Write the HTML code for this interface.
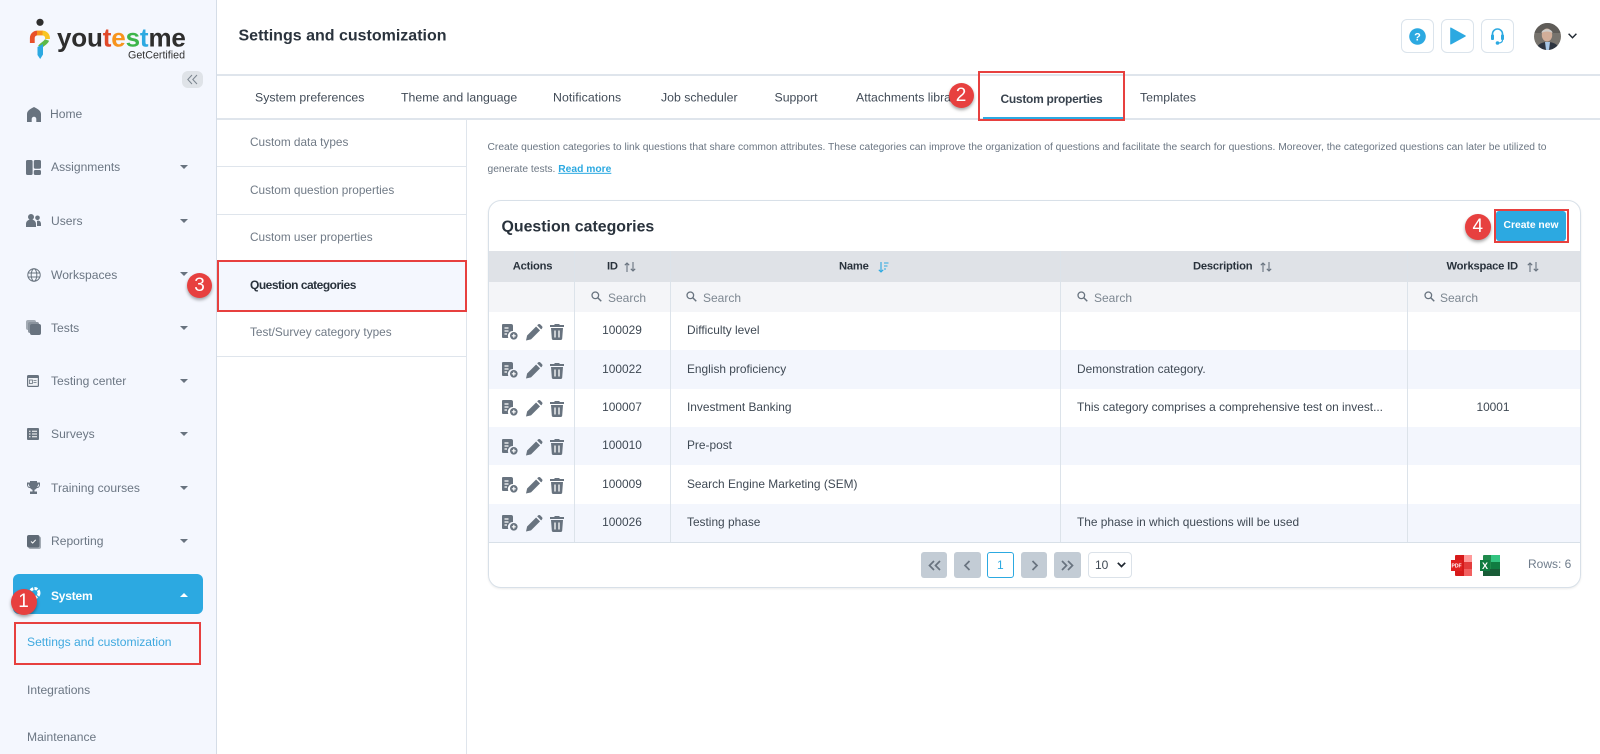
<!DOCTYPE html>
<html><head><meta charset="utf-8"><title>Settings and customization</title>
<style>
html,body{margin:0;padding:0;width:1600px;height:754px;overflow:hidden;background:#fff;font-family:"Liberation Sans",sans-serif}
.a{position:absolute}
.t{position:absolute;white-space:nowrap;transform:translateY(-50%);line-height:1.2}
.c{transform:translate(-50%,-50%)}
.s{font-size:12.1px;color:#6b7683}
.tab{font-size:12.3px;color:#414b57}
.sub{font-size:11.8px;color:#707a86}
.h{font-size:11.2px;font-weight:bold;letter-spacing:-.2px;color:#29323c}
.ph{font-size:12px;color:#7d8791}
.d{font-size:11.9px;color:#3f4954}
.b{position:absolute;width:26px;height:26px;border-radius:50%;background:#e7403f;color:#fff;font-size:19px;line-height:26px;text-align:center;box-shadow:0 2px 3px rgba(0,0,0,.35)}
.r{position:absolute;border:2.5px solid #e7403f;box-sizing:border-box}
.ln{position:absolute;background:#dfe5ec}
.pg{position:absolute;top:551.5px;width:26.5px;height:26.5px;border-radius:3px;background:#c3ccd5}
.tri{position:absolute;left:180px;width:0;height:0;border-left:4px solid transparent;border-right:4px solid transparent;border-top:4.5px solid #68737f}
svg{position:absolute;overflow:visible}
.hb{position:absolute;top:19px;width:33px;height:33.5px;border:1px solid #dbe4ec;border-radius:6px;box-sizing:border-box}
</style></head><body>

<svg width="0" height="0" style="position:absolute"><defs>
<symbol id="doc" viewBox="0 0 16 16"><path fill="#68737f" d="M1 0h8a2 2 0 0 1 2 2v5a5 5 0 0 0-4.7 7H1a1 1 0 0 1-1-1V1a1 1 0 0 1 1-1z"/><path stroke="#fff" stroke-width="1.2" d="M2.5 4h4M2.5 7h4M2.5 10h2.5"/><circle cx="11.8" cy="11.8" r="3.8" fill="#68737f"/><path stroke="#fff" stroke-width="1.2" d="M9.8 11.8h4M11.8 9.8v4"/></symbol>
<symbol id="pen" viewBox="0 0 18 18"><path fill="#68737f" d="M0 18 1.2 12.5 11 2.700 15.300 7 5.500 16.800z"/><path fill="#68737f" d="M12.200 1.500 13 .7a2 2 0 0 1 2.800 0l1.500 1.500a2 2 0 0 1 0 2.800l-.8.800z"/></symbol>
<symbol id="tr" viewBox="0 0 14 16"><path fill="#68737f" d="M5 0h4l1 1h4v2H0V1h4zM1 4h12l-.8 10.500A1.600 1.600 0 0 1 10.600 16H3.400a1.600 1.600 0 0 1-1.600-1.500z"/><path stroke="#fff" stroke-width="1.300" d="M5 6.500v7M9 6.500v7"/></symbol>
<symbol id="mag" viewBox="0 0 12 12"><circle cx="4.700" cy="4.700" r="3.600" fill="none" stroke="#68737f" stroke-width="1.400"/><path stroke="#68737f" stroke-width="1.600" d="M7.500 7.500l3.700 3.700"/></symbol>
<symbol id="sort" viewBox="0 0 12 12"><path fill="none" stroke="#68737f" stroke-width="1.100" d="M3 11V2M.8 4.200 3 2l2.200 2.200M9 1v9M6.800 7.800 9 10l2.200-2.200"/></symbol>
</defs></svg>

<!-- sidebar -->
<div class="a" style="left:0;top:0;width:216px;height:754px;background:#f4f7fe;border-right:1.5px solid #d5dde7"></div>
<svg style="left:29px;top:18px" width="22" height="42" viewBox="0 0 22 42" fill="none">
<circle cx="11" cy="4.300" r="3.600" fill="#2e2e2e"/>
<path d="M3.300 25V20a5 5 0 0 1 5-5" stroke="#e8502a" stroke-width="4.800"/>
<path d="M8 15h6" stroke="#f7941d" stroke-width="4.800"/>
<path d="M13.500 15a5 5 0 0 1 5 5v1" stroke="#f9c523" stroke-width="4.800"/>
<path d="M18 22c-1 3-5 4-7 7" stroke="#5cb947" stroke-width="4.400"/>
<path d="M8.500 29l5.500-3v10.500L11.200 41 8.500 37z" fill="#2ca9e1"/></svg>
<div class="t" style="left:57px;top:38px;font-size:26px;font-weight:bold;letter-spacing:-.15px;color:#2e2e2e">you<span style="color:#e0492a">t</span><span style="color:#f7941d">e</span><span style="color:#3db54a">s</span><span style="color:#2ca9e1">t</span>me</div>
<div class="t" style="left:128px;top:55.500px;font-size:10.700px;color:#333">GetCertified</div>
<div class="a" style="left:182px;top:71px;width:21px;height:17px;border-radius:6px;background:#dfe3e8"></div>
<svg style="left:187px;top:74px" width="11" height="11" viewBox="0 0 11 11"><path fill="none" stroke="#7b858f" d="M5 1 .8 5.500 5 10M10 1 5.800 5.500 10 10"/></svg>

<svg style="left:27px;top:107px" width="14" height="15" viewBox="0 0 14 15"><path fill="#68737f" d="M7 0C10 1.500 14 3.500 14 7v8H9.300v-3a2.300 2.300 0 0 0-4.600 0v3H0V7C0 3.500 4 1.500 7 0z"/></svg>
<div class="t s" style="left:50px;top:114px">Home</div>

<svg style="left:26px;top:160px" width="15" height="15" viewBox="0 0 15 15"><rect width="6.600" height="15" rx="1.500" fill="#68737f"/><rect x="7.800" width="7.200" height="8.800" rx="1.500" fill="#68737f"/><rect x="7.800" y="10" width="7.200" height="5" rx="1.500" fill="#68737f"/></svg>
<div class="t s" style="left:51px;top:167px">Assignments</div><div class="tri" style="top:165px"></div>

<svg style="left:26px;top:214px" width="15" height="13" viewBox="0 0 15 13"><circle cx="5" cy="3" r="3" fill="#68737f"/><circle cx="11.500" cy="3.800" r="2.300" fill="#68737f"/><path fill="#68737f" d="M0 10c0-6 10-6 10 0v3H0zM11 7c2-1 4 .5 4 3v2h-4z"/></svg>
<div class="t s" style="left:51px;top:221px">Users</div><div class="tri" style="top:219px"></div>

<svg style="left:26.500px;top:267.500px" width="14" height="14" viewBox="0 0 14 14" fill="none" stroke="#68737f"><circle cx="7" cy="7" r="6.200"/><ellipse cx="7" cy="7" rx="2.800" ry="6.200"/><path d="M1 5h12M1 9h12"/></svg>
<div class="t s" style="left:51px;top:274.500px">Workspaces</div><div class="tri" style="top:272px"></div>

<svg style="left:26px;top:320px" width="15" height="15" viewBox="0 0 15 15"><rect x="0" y="0" width="10" height="10" rx="2" fill="#a3abb4"/><rect x="2" y="2" width="11" height="11" rx="2" fill="#8a939d"/><rect x="4" y="4" width="11" height="11" rx="2" fill="#68737f"/></svg>
<div class="t s" style="left:51px;top:327.500px">Tests</div><div class="tri" style="top:325.500px"></div>

<svg style="left:27px;top:374.500px" width="12" height="12" viewBox="0 0 12 12"><rect width="12" height="12" rx="1.500" fill="#68737f"/><rect x="1.200" y="3" width="9.600" height="7.800" fill="#eef1f5"/><rect x="2.400" y="5" width="3" height="3.500" fill="none" stroke="#68737f" stroke-width=".8"/><path stroke="#68737f" stroke-width=".8" d="M6.500 5.500h3M6.500 7.500h3"/></svg>
<div class="t s" style="left:51px;top:381px">Testing center</div><div class="tri" style="top:378.500px"></div>

<svg style="left:27px;top:428px" width="12" height="12" viewBox="0 0 12 12"><rect width="12" height="12" rx="1" fill="#68737f"/><path stroke="#fff" d="M2 3.200h1.500M5 3.200h5M2 6h1.500M5 6h5M2 8.800h1.500M5 8.800h5"/></svg>
<div class="t s" style="left:51px;top:434px">Surveys</div><div class="tri" style="top:432px"></div>

<svg style="left:27px;top:481px" width="13" height="13" viewBox="0 0 13 13"><path fill="#68737f" d="M3 0h7v1.500h3V4a3 3 0 0 1-3.200 3A3.500 3.500 0 0 1 7.500 8.900V10.500H10V13H3v-2.500h2.500V8.900A3.500 3.500 0 0 1 3.200 7 3 3 0 0 1 0 4V1.500h3zM1 2.500V4a2 2 0 0 0 2 2zM12 2.500 10 6a2 2 0 0 0 2-2z"/></svg>
<div class="t s" style="left:51px;top:488px">Training courses</div><div class="tri" style="top:486px"></div>

<svg style="left:27px;top:534.500px" width="14" height="14" viewBox="0 0 14 14"><rect x="1.500" y="1.500" width="12.500" height="12.500" rx="2" fill="#a3abb4"/><rect width="12.500" height="12.500" rx="2" fill="#5f6a76"/><path fill="none" stroke="#fff" stroke-width="1" d="M4 6.500 5.700 8 8.700 4.800"/></svg>
<div class="t s" style="left:51px;top:541px">Reporting</div><div class="tri" style="top:539px"></div>

<div class="a" style="left:13px;top:574px;width:189.500px;height:40px;border-radius:6px;background:#2ca9e1"></div>
<svg style="left:28px;top:586px" width="13" height="14" viewBox="0 0 13 14"><circle cx="6.500" cy="7" r="4.500" fill="none" stroke="#fff" stroke-width="3" stroke-dasharray="3 1.200"/></svg>
<div class="t" style="left:51px;top:595.500px;font-size:12px;letter-spacing:-.2px;font-weight:bold;color:#fff">System</div>
<div class="tri" style="top:592.500px;border-top:0;border-bottom:4.500px solid #fff"></div>
<div class="b" style="left:10.500px;top:589px">1</div>
<div class="r" style="left:14px;top:622px;width:186.500px;height:42.500px"></div>
<div class="t" style="left:27px;top:642px;font-size:12.100px;color:#3fa9df">Settings and customization</div>
<div class="t s" style="left:27px;top:689.500px">Integrations</div>
<div class="t s" style="left:27px;top:737px">Maintenance</div>

<!-- header -->
<div class="t" style="left:238.500px;top:36px;font-size:16px;font-weight:bold;color:#2a333d">Settings and customization</div>
<div class="ln" style="left:217px;top:74px;width:1383px;height:1.500px"></div>
<div class="hb" style="left:1400.500px"></div><div class="hb" style="left:1441px"></div><div class="hb" style="left:1481px"></div>
<svg style="left:1409px;top:27.500px" width="17" height="17" viewBox="0 0 17 17"><circle cx="8.500" cy="8.500" r="8.300" fill="#2ca9e1"/><text x="8.500" y="12.500" font-size="11" font-weight="bold" fill="#fff" text-anchor="middle" font-family="Liberation Sans">?</text></svg>
<svg style="left:1450px;top:27px" width="16" height="18" viewBox="0 0 16 18"><path fill="#2ca9e1" stroke="#2ca9e1" stroke-linejoin="round" d="M.7 1v16L15.300 9z"/></svg>
<svg style="left:1491px;top:27.500px" width="13" height="17" viewBox="0 0 13 17" fill="none"><path stroke="#2ca9e1" stroke-width="1.600" d="M1.500 9V6a5 5 0 0 1 10 0v3"/><rect y="6.500" width="3" height="5.500" rx="1" fill="#2ca9e1"/><rect x="10" y="6.500" width="3" height="5.500" rx="1" fill="#2ca9e1"/><path stroke="#2ca9e1" stroke-width="1.200" d="M11.500 12c0 2-1.500 3-4 3"/><circle cx="6.500" cy="15" r="1.800" fill="#2ca9e1"/></svg>
<svg style="left:1533.500px;top:22.500px" width="27" height="27" viewBox="0 0 27 27"><defs><clipPath id="av"><circle cx="13.500" cy="13.500" r="13.500"/></clipPath></defs><g clip-path="url(#av)"><rect width="27" height="27" fill="#77736d"/><rect width="27" height="10" fill="#5f5c58"/><path fill="#2e3540" d="M2 27c1-6 6-8 11.500-8s11 2 12 8z"/><path fill="#a9c7e6" d="M11 19h5l-1 8h-3z"/><ellipse cx="13" cy="12" rx="5.200" ry="6.500" fill="#d2ae99"/><path fill="#cfcdca" d="M7.500 10c0-5 11-5 11 0-3-2-8-2-11 0z"/></g></svg>
<svg style="left:1568px;top:33px" width="9" height="6" viewBox="0 0 9 6"><path fill="none" stroke="#1f2730" stroke-width="1.400" d="M.6.800 4.500 4.800 8.400.8"/></svg>

<!-- tabs -->
<div class="t tab" style="left:255px;top:98px">System preferences</div>
<div class="t tab" style="left:401px;top:98px">Theme and language</div>
<div class="t tab" style="left:553px;top:98px;letter-spacing:.1px">Notifications</div>
<div class="t tab" style="left:661px;top:98px">Job scheduler</div>
<div class="t tab" style="left:774.500px;top:98px">Support</div>
<div class="t tab" style="left:856px;top:98px">Attachments library</div>
<div class="a" style="left:983px;top:116.500px;width:141px;height:2px;background:#2ca9e1"></div>
<div class="ln" style="left:217px;top:118px;width:766px;height:1.500px"></div>
<div class="ln" style="left:1124px;top:118px;width:476px;height:1.500px"></div>
<div class="b" style="left:948.500px;top:82.500px;width:25px;height:25px;line-height:25px">2</div>
<div class="r" style="left:978px;top:70.500px;width:147px;height:50.500px"></div>
<div class="t" style="left:1000.500px;top:98.500px;font-size:12px;letter-spacing:-.28px;font-weight:bold;color:#39434e">Custom properties</div>
<div class="t tab" style="left:1140px;top:98px">Templates</div>

<!-- left panel -->
<div class="ln" style="left:466px;top:119px;width:1px;height:635px"></div>
<div class="t sub" style="left:250px;top:142px">Custom data types</div>
<div class="ln" style="left:217px;top:166px;width:250px;height:1px"></div>
<div class="t sub" style="left:250px;top:189.500px">Custom question properties</div>
<div class="ln" style="left:217px;top:213.500px;width:250px;height:1px"></div>
<div class="t sub" style="left:250px;top:237px">Custom user properties</div>
<div class="a" style="left:217px;top:262px;width:249px;height:48px;background:#f4f7fe"></div>
<div class="r" style="left:216.500px;top:260px;width:250.500px;height:51.500px"></div>
<div class="t" style="left:250px;top:285px;font-size:12px;letter-spacing:-.5px;font-weight:bold;color:#29323c">Question categories</div>
<div class="b" style="left:187px;top:273px;width:25px;height:25px;line-height:25px">3</div>
<div class="t sub" style="left:250px;top:332px">Test/Survey category types</div>
<div class="ln" style="left:217px;top:356px;width:250px;height:1px"></div>

<!-- description -->
<div class="t" style="left:487.500px;top:148px;font-size:10.280px;color:#6b7683">Create question categories to link questions that share common attributes. These categories can improve the organization of questions and facilitate the search for questions. Moreover, the categorized questions can later be utilized to</div>
<div class="t" style="left:487.500px;top:169.500px;font-size:10.280px;color:#6b7683">generate tests. <span style="color:#2ca9e1;font-weight:bold;text-decoration:underline">Read more</span></div>

<!-- card -->
<div class="a" style="left:487.500px;top:199.500px;width:1093px;height:388px;box-sizing:border-box;border:1.200px solid #d8e0e8;border-radius:13px;box-shadow:0 1px 2px rgba(0,0,0,.08)"></div>
<div class="t" style="left:501.500px;top:226.500px;font-size:15.900px;font-weight:bold;color:#29323c">Question categories</div>
<div class="a" style="left:1496px;top:210.500px;width:70px;height:30px;background:#2ca9e1;border-radius:3px"></div>
<div class="t c" style="left:1531px;top:225.500px;font-size:10.300px;font-weight:bold;color:#fff">Create new</div>
<div class="r" style="left:1493.500px;top:208.500px;width:75px;height:34px"></div>
<div class="b" style="left:1465px;top:214px;width:25.500px;height:25.500px;line-height:25.500px">4</div>

<!-- table backgrounds -->
<div class="a" style="left:488.500px;top:251px;width:1091px;height:31px;background:#dfe2e7"></div>
<div class="a" style="left:488.500px;top:282px;width:1091px;height:30px;background:#f4f5f8"></div>
<div class="a" style="left:488.500px;top:350.300px;width:1091px;height:38.300px;background:#f3f6fd"></div>
<div class="a" style="left:488.500px;top:426.900px;width:1091px;height:38.300px;background:#f3f6fd"></div>
<div class="a" style="left:488.500px;top:503.500px;width:1091px;height:38.300px;background:#f3f6fd"></div>
<div class="ln" style="left:488.500px;top:542px;width:1091px;height:1.200px;background:#d8e0e8"></div>
<div class="ln" style="left:574px;top:251px;width:1.200px;height:291px;background:#dce3ea"></div>
<div class="ln" style="left:669.500px;top:251px;width:1.200px;height:291px;background:#dce3ea"></div>
<div class="ln" style="left:1059.500px;top:251px;width:1.200px;height:291px;background:#dce3ea"></div>
<div class="ln" style="left:1406.500px;top:251px;width:1.200px;height:291px;background:#dce3ea"></div>

<!-- headers -->
<div class="t h c" style="left:532.500px;top:266.500px">Actions</div>
<div class="t h" style="left:607px;top:266.500px">ID</div><svg style="left:624px;top:260.500px" width="12" height="12"><use href="#sort"/></svg>
<div class="t h" style="left:839px;top:266.500px">Name</div>
<svg style="left:877px;top:260.500px" width="12" height="12" viewBox="0 0 12 12"><path fill="none" stroke="#2ca9e1" stroke-width="1.100" d="M4 1v10M1.800 8.800 4 11l2.200-2.200M7 2h4.500M7 5h3.500M7 8h2"/></svg>
<div class="t h" style="left:1193px;top:266.500px">Description</div><svg style="left:1260px;top:260.500px" width="12" height="12"><use href="#sort"/></svg>
<div class="t h" style="left:1446.500px;top:266.500px">Workspace ID</div><svg style="left:1527px;top:260.500px" width="12" height="12"><use href="#sort"/></svg>

<!-- search -->
<svg style="left:591px;top:291px" width="11" height="11"><use href="#mag"/></svg><div class="t ph" style="left:608px;top:297.500px">Search</div>
<svg style="left:686px;top:291px" width="11" height="11"><use href="#mag"/></svg><div class="t ph" style="left:703px;top:297.500px">Search</div>
<svg style="left:1077px;top:291px" width="11" height="11"><use href="#mag"/></svg><div class="t ph" style="left:1094px;top:297.500px">Search</div>
<svg style="left:1424px;top:291px" width="11" height="11"><use href="#mag"/></svg><div class="t ph" style="left:1440px;top:297.500px">Search</div>

<!-- row icons -->
<svg style="left:501.500px;top:323.500px" width="16" height="16"><use href="#doc"/></svg><svg style="left:525.500px;top:323.500px" width="16.500" height="16.500"><use href="#pen"/></svg><svg style="left:550px;top:324px" width="14" height="16"><use href="#tr"/></svg>
<svg style="left:501.500px;top:362px" width="16" height="16"><use href="#doc"/></svg><svg style="left:525.500px;top:362px" width="16.500" height="16.500"><use href="#pen"/></svg><svg style="left:550px;top:362.500px" width="14" height="16"><use href="#tr"/></svg>
<svg style="left:501.500px;top:400px" width="16" height="16"><use href="#doc"/></svg><svg style="left:525.500px;top:400px" width="16.500" height="16.500"><use href="#pen"/></svg><svg style="left:550px;top:400.500px" width="14" height="16"><use href="#tr"/></svg>
<svg style="left:501.500px;top:438.500px" width="16" height="16"><use href="#doc"/></svg><svg style="left:525.500px;top:438.500px" width="16.500" height="16.500"><use href="#pen"/></svg><svg style="left:550px;top:439px" width="14" height="16"><use href="#tr"/></svg>
<svg style="left:501.500px;top:477px" width="16" height="16"><use href="#doc"/></svg><svg style="left:525.500px;top:477px" width="16.500" height="16.500"><use href="#pen"/></svg><svg style="left:550px;top:477.500px" width="14" height="16"><use href="#tr"/></svg>
<svg style="left:501.500px;top:515px" width="16" height="16"><use href="#doc"/></svg><svg style="left:525.500px;top:515px" width="16.500" height="16.500"><use href="#pen"/></svg><svg style="left:550px;top:515.500px" width="14" height="16"><use href="#tr"/></svg>

<!-- rows -->
<div class="t d c" style="left:622px;top:330px">100029</div><div class="t d" style="left:687px;top:330px">Difficulty level</div>
<div class="t d c" style="left:622px;top:368.500px">100022</div><div class="t d" style="left:687px;top:368.500px">English proficiency</div><div class="t d" style="left:1077px;top:368.500px">Demonstration category.</div>
<div class="t d c" style="left:622px;top:407px">100007</div><div class="t d" style="left:687px;top:407px">Investment Banking</div><div class="t d" style="left:1077px;top:407px">This category comprises a comprehensive test on invest...</div><div class="t d c" style="left:1493px;top:407px">10001</div>
<div class="t d c" style="left:622px;top:445px">100010</div><div class="t d" style="left:687px;top:445px">Pre-post</div>
<div class="t d c" style="left:622px;top:484px">100009</div><div class="t d" style="left:687px;top:484px">Search Engine Marketing (SEM)</div>
<div class="t d c" style="left:622px;top:522px">100026</div><div class="t d" style="left:687px;top:522px">Testing phase</div><div class="t d" style="left:1077px;top:522px">The phase in which questions will be used</div>

<!-- pagination -->
<div class="pg" style="left:920.500px"></div><div class="pg" style="left:954px"></div><div class="pg" style="left:1020.500px"></div><div class="pg" style="left:1054px"></div>
<svg style="left:920.500px;top:551.500px" width="27" height="27" fill="none" stroke="#68737f" stroke-width="1.700"><path d="M13 9l-4.500 4.500L13 18M19 9l-4.500 4.500L19 18"/></svg>
<svg style="left:954px;top:551.500px" width="27" height="27" fill="none" stroke="#68737f" stroke-width="1.700"><path d="M15.500 9 11 13.500l4.500 4.500"/></svg>
<svg style="left:1020.500px;top:551.500px" width="27" height="27" fill="none" stroke="#68737f" stroke-width="1.700"><path d="M11.500 9 16 13.500 11.500 18"/></svg>
<svg style="left:1054px;top:551.500px" width="27" height="27" fill="none" stroke="#68737f" stroke-width="1.700"><path d="M8 9l4.500 4.500L8 18M14 9l4.500 4.500L14 18"/></svg>
<div class="a" style="left:987px;top:551.500px;width:26.500px;height:26.500px;box-sizing:border-box;border:1px solid #2ca9e1;border-radius:3px;background:#fff"></div>
<div class="t c" style="left:1000.300px;top:565px;font-size:12px;color:#2ca9e1">1</div>
<div class="a" style="left:1087.500px;top:551.500px;width:44px;height:26.500px;box-sizing:border-box;border:1px solid #dbe2e9;border-radius:4px;background:#fff"></div>
<div class="t" style="left:1095px;top:565px;font-size:12px;color:#3f4954">10</div>
<svg style="left:1117px;top:562px" width="9" height="6"><path fill="none" stroke="#1f2730" stroke-width="1.700" d="M.8.800 4.500 4.500 8.200.8"/></svg>

<!-- export -->
<svg style="left:1451px;top:555px" width="21" height="21" viewBox="0 0 21 21"><rect x="4" width="17" height="21" rx="1" fill="#d61a1a"/><rect x="13" width="8" height="7" fill="#f99"/><rect x="13" y="7" width="8" height="7" fill="#e33b3b"/><rect x="13" y="14" width="8" height="7" fill="#f26060"/><rect y="5" width="11" height="11" fill="#e02020"/><text x="5.500" y="12.500" font-size="5" font-weight="bold" fill="#fff" text-anchor="middle" font-family="Liberation Sans">PDF</text></svg>
<svg style="left:1480px;top:555px" width="20" height="21" viewBox="0 0 20 21"><rect x="3" width="17" height="21" rx="1" fill="#1f8a4c"/><rect x="11" width="9" height="7" fill="#33c481"/><rect x="3" y="14" width="17" height="7" fill="#185c37"/><rect x="11" y="7" width="9" height="7" fill="#107c41"/><rect y="5" width="10" height="11" fill="#0f7b3f"/><text x="5" y="13.800" font-size="9" font-weight="bold" fill="#fff" text-anchor="middle" font-family="Liberation Sans">X</text></svg>
<div class="t" style="left:1528px;top:564px;font-size:12px;color:#6f7c8b">Rows: 6</div>

</body></html>
